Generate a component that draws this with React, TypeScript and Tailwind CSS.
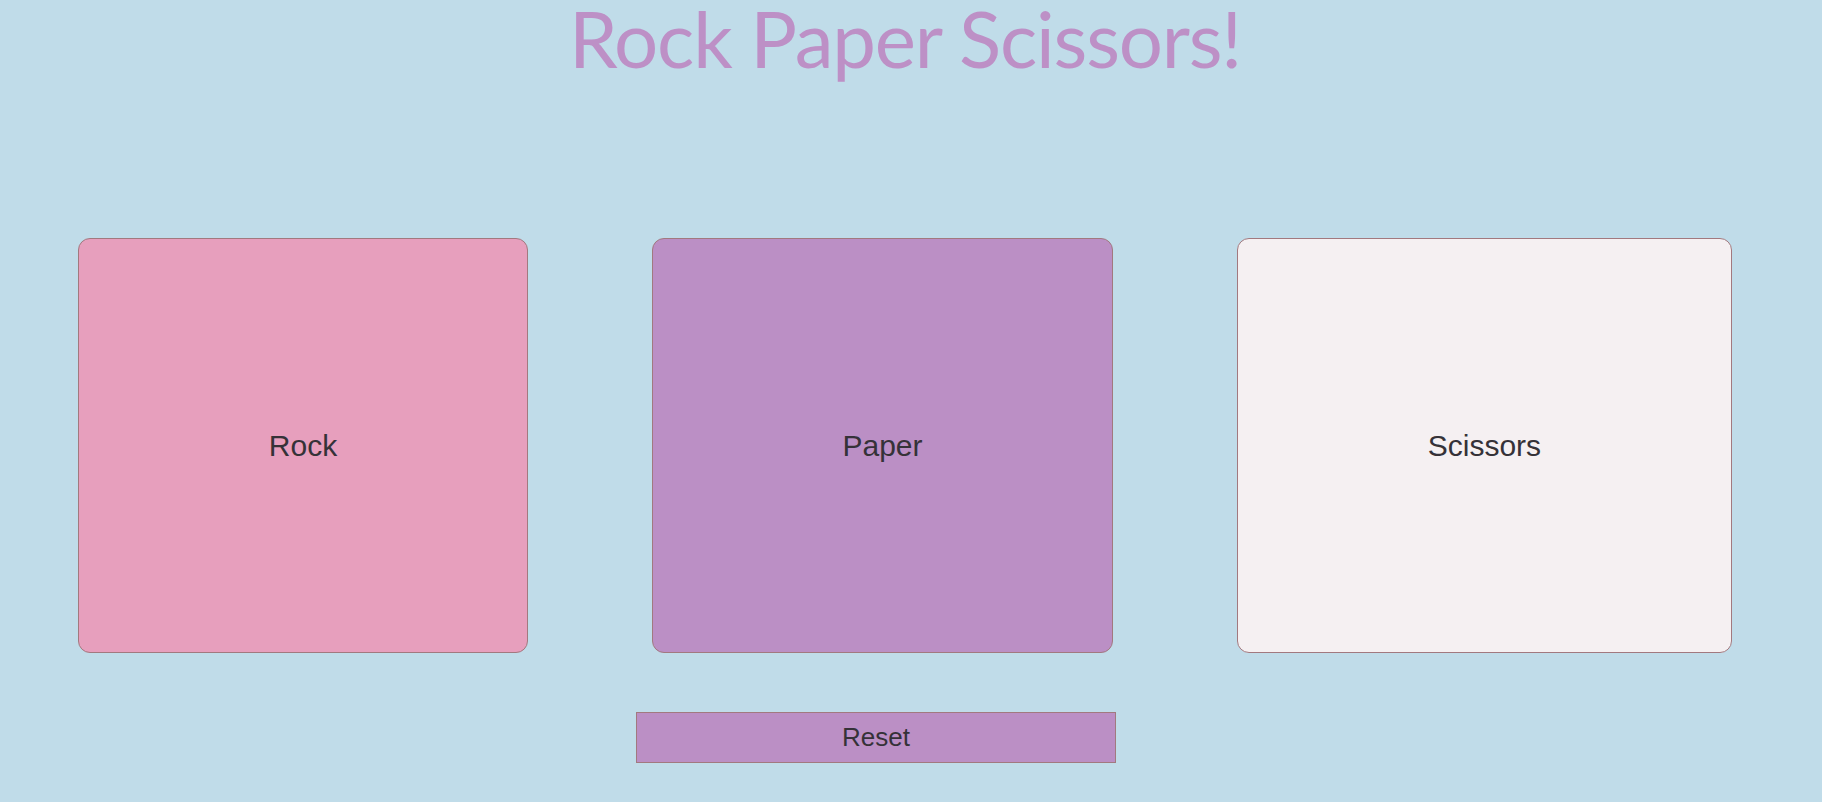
import React from "react";

export default function App() {
  return (
    <div className="min-h-[802px] w-full bg-[#c0dce9] font-['Liberation_Sans',Arial,sans-serif] overflow-hidden">
      <h1 className="pr-[12px] pt-[6px] text-center font-['Lato',sans-serif] text-[78px] leading-[64px] font-normal tracking-[-1.2px] text-[#bd90c6]">
        Rock Paper Scissors!
      </h1>
      <div className="mt-[168px] flex pl-[78px] pr-[90px] gap-[123.5px]">
        <button className="grow h-[415px] rounded-[12px] border border-[#a2797f] bg-[#e79fbd] text-[30px] text-[#353238]">
          Rock
        </button>
        <button className="grow h-[415px] rounded-[12px] border border-[#a2797f] bg-[#bb8fc5] text-[30px] text-[#353238]">
          Paper
        </button>
        <button className="grow h-[415px] rounded-[12px] border border-[#a2797f] bg-[#f5f0f2] text-[30px] text-[#353238]">
          Scissors
        </button>
      </div>
      <div className="mt-[59px] pl-[636px]">
        <button className="w-[480px] h-[51px] border border-[#a2797f] bg-[#bb8fc5] text-[26px] text-[#353238]">
          Reset
        </button>
      </div>
    </div>
  );
}
